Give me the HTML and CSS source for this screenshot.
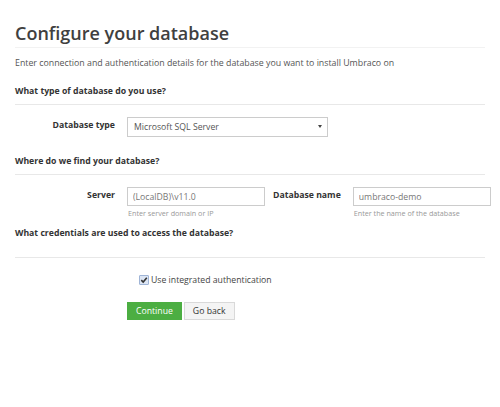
FILE: index.html
```html
<!DOCTYPE html>
<html lang="en">
<head>
    <meta charset="UTF-8">
    <meta name="viewport" content="width=device-width, initial-scale=1.0">
    <title>Configure your database</title>
    <link rel="stylesheet" href="styles.css">
</head>
<body>
    <div class="container">
        <h1>Configure your database</h1>
        <p class="intro">Enter connection and authentication details for the database you want to install Umbraco on</p>

        <h2>What type of database do you use?</h2>
        <div class="form-row">
            <label for="dbType">Database type</label>
            <div class="select-wrap">
                <select id="dbType">
                    <option>Microsoft SQL Server</option>
                </select>
            </div>
        </div>

        <h2 class="next">Where do we find your database?</h2>
        <div class="form-row">
            <label for="server">Server</label>
            <div class="field">
                <input type="text" id="server" value="(LocalDB)\v11.0">
                <small>Enter server domain or IP</small>
            </div>
            <label for="dbName" class="inline-label">Database name</label>
            <div class="field">
                <input type="text" id="dbName" value="umbraco-demo">
                <small>Enter the name of the database</small>
            </div>
        </div>

        <h2 class="tall">What credentials are used to access the database?</h2>
        <div class="form-row check-row">
            <label class="check">
                <span class="box">
                    <svg width="8" height="8" viewBox="0 0 8 8"><path d="M1.3 4.2 L3.2 6 L6.8 1.8" fill="none" stroke="#333" stroke-width="1.6"/></svg>
                </span>
                Use integrated authentication
            </label>
        </div>

        <div class="buttons">
            <button class="btn-primary">Continue</button>
            <button class="btn">Go back</button>
        </div>
    </div>
</body>
</html>
```

FILE: styles.css
```css
body {
    font-family: "Open Sans", Arial, sans-serif;
    margin: 0;
    padding: 0;
    background-color: #fff;
    color: #333;
}

.container {
    padding: 20px 15px 0 15px;
}

h1 {
    margin: 0;
    font-size: 18px;
    font-weight: 600;
    color: #404040;
    line-height: 26px;
    padding-bottom: 1px;
    border-bottom: 1px solid #f2f2f2;
}

.intro {
    margin: 8px 0 0 0;
    font-size: 8.8px;
    line-height: 14px;
    color: #555;
}

h2 {
    margin: 14px 0 0 0;
    font-size: 8.7px;
    font-weight: 700;
    color: #333;
    line-height: 14px;
    padding-bottom: 6px;
    border-bottom: 1px solid #e8e8e8;
}

h2.next {
    margin-top: 17px;
}

h2.tall {
    margin-top: 8px;
    padding-bottom: 17px;
}

.form-row {
    display: flex;
    align-items: flex-start;
    margin-top: 12px;
}

.form-row > * {
    flex-shrink: 0;
}

.form-row label {
    width: 100px;
    text-align: right;
    font-size: 8.7px;
    font-weight: 700;
    line-height: 14px;
    padding-top: 1px;
    margin-right: 12px;
    white-space: nowrap;
}

.form-row .inline-label {
    width: auto;
    margin-left: 8px;
}

.select-wrap {
    position: relative;
    width: 201px;
}

.select-wrap::after {
    content: "";
    position: absolute;
    right: 6px;
    top: 8px;
    border-left: 2px solid transparent;
    border-right: 2px solid transparent;
    border-top: 3px solid #444;
}

select {
    -webkit-appearance: none;
    appearance: none;
    display: block;
    width: 100%;
    height: 20px;
    border: 1px solid #ccc;
    border-radius: 0;
    background: #fff;
    font-family: inherit;
    font-size: 8.7px;
    color: #555;
    padding: 0 6px;
    margin: 0;
}

.field {
    display: flex;
    flex-direction: column;
}

.field input {
    width: 138px;
    height: 19px;
    box-sizing: border-box;
    border: 1px solid #ccc;
    padding: 0 5px;
    font-family: inherit;
    font-size: 8.7px;
    color: #777;
    margin: 0;
}

.field small {
    font-size: 7.2px;
    color: #999;
    margin-top: 2px;
    padding-left: 1px;
}

.check-row {
    margin-top: 14px;
}

.form-row .check {
    width: auto;
    text-align: left;
    font-weight: 400;
    color: #444;
    margin-left: 124px;
    display: flex;
    align-items: center;
    gap: 2px;
}

.box {
    display: inline-flex;
    align-items: center;
    justify-content: center;
    width: 8px;
    height: 8px;
    border: 1px solid #9fb4d6;
    background: #dde6f4;
    border-radius: 1px;
}

.buttons {
    display: flex;
    gap: 2px;
    margin: 15px 0 0 112px;
}

button {
    font-family: inherit;
    font-size: 8.7px;
    height: 18px;
    padding: 0 8px;
    border-radius: 0;
    cursor: pointer;
}

.btn-primary {
    background-color: #4cae42;
    border: 1px solid #4cae42;
    color: #fff;
}

.btn {
    background-color: #f4f4f4;
    border: 1px solid #d9d9d9;
    color: #333;
}
```
